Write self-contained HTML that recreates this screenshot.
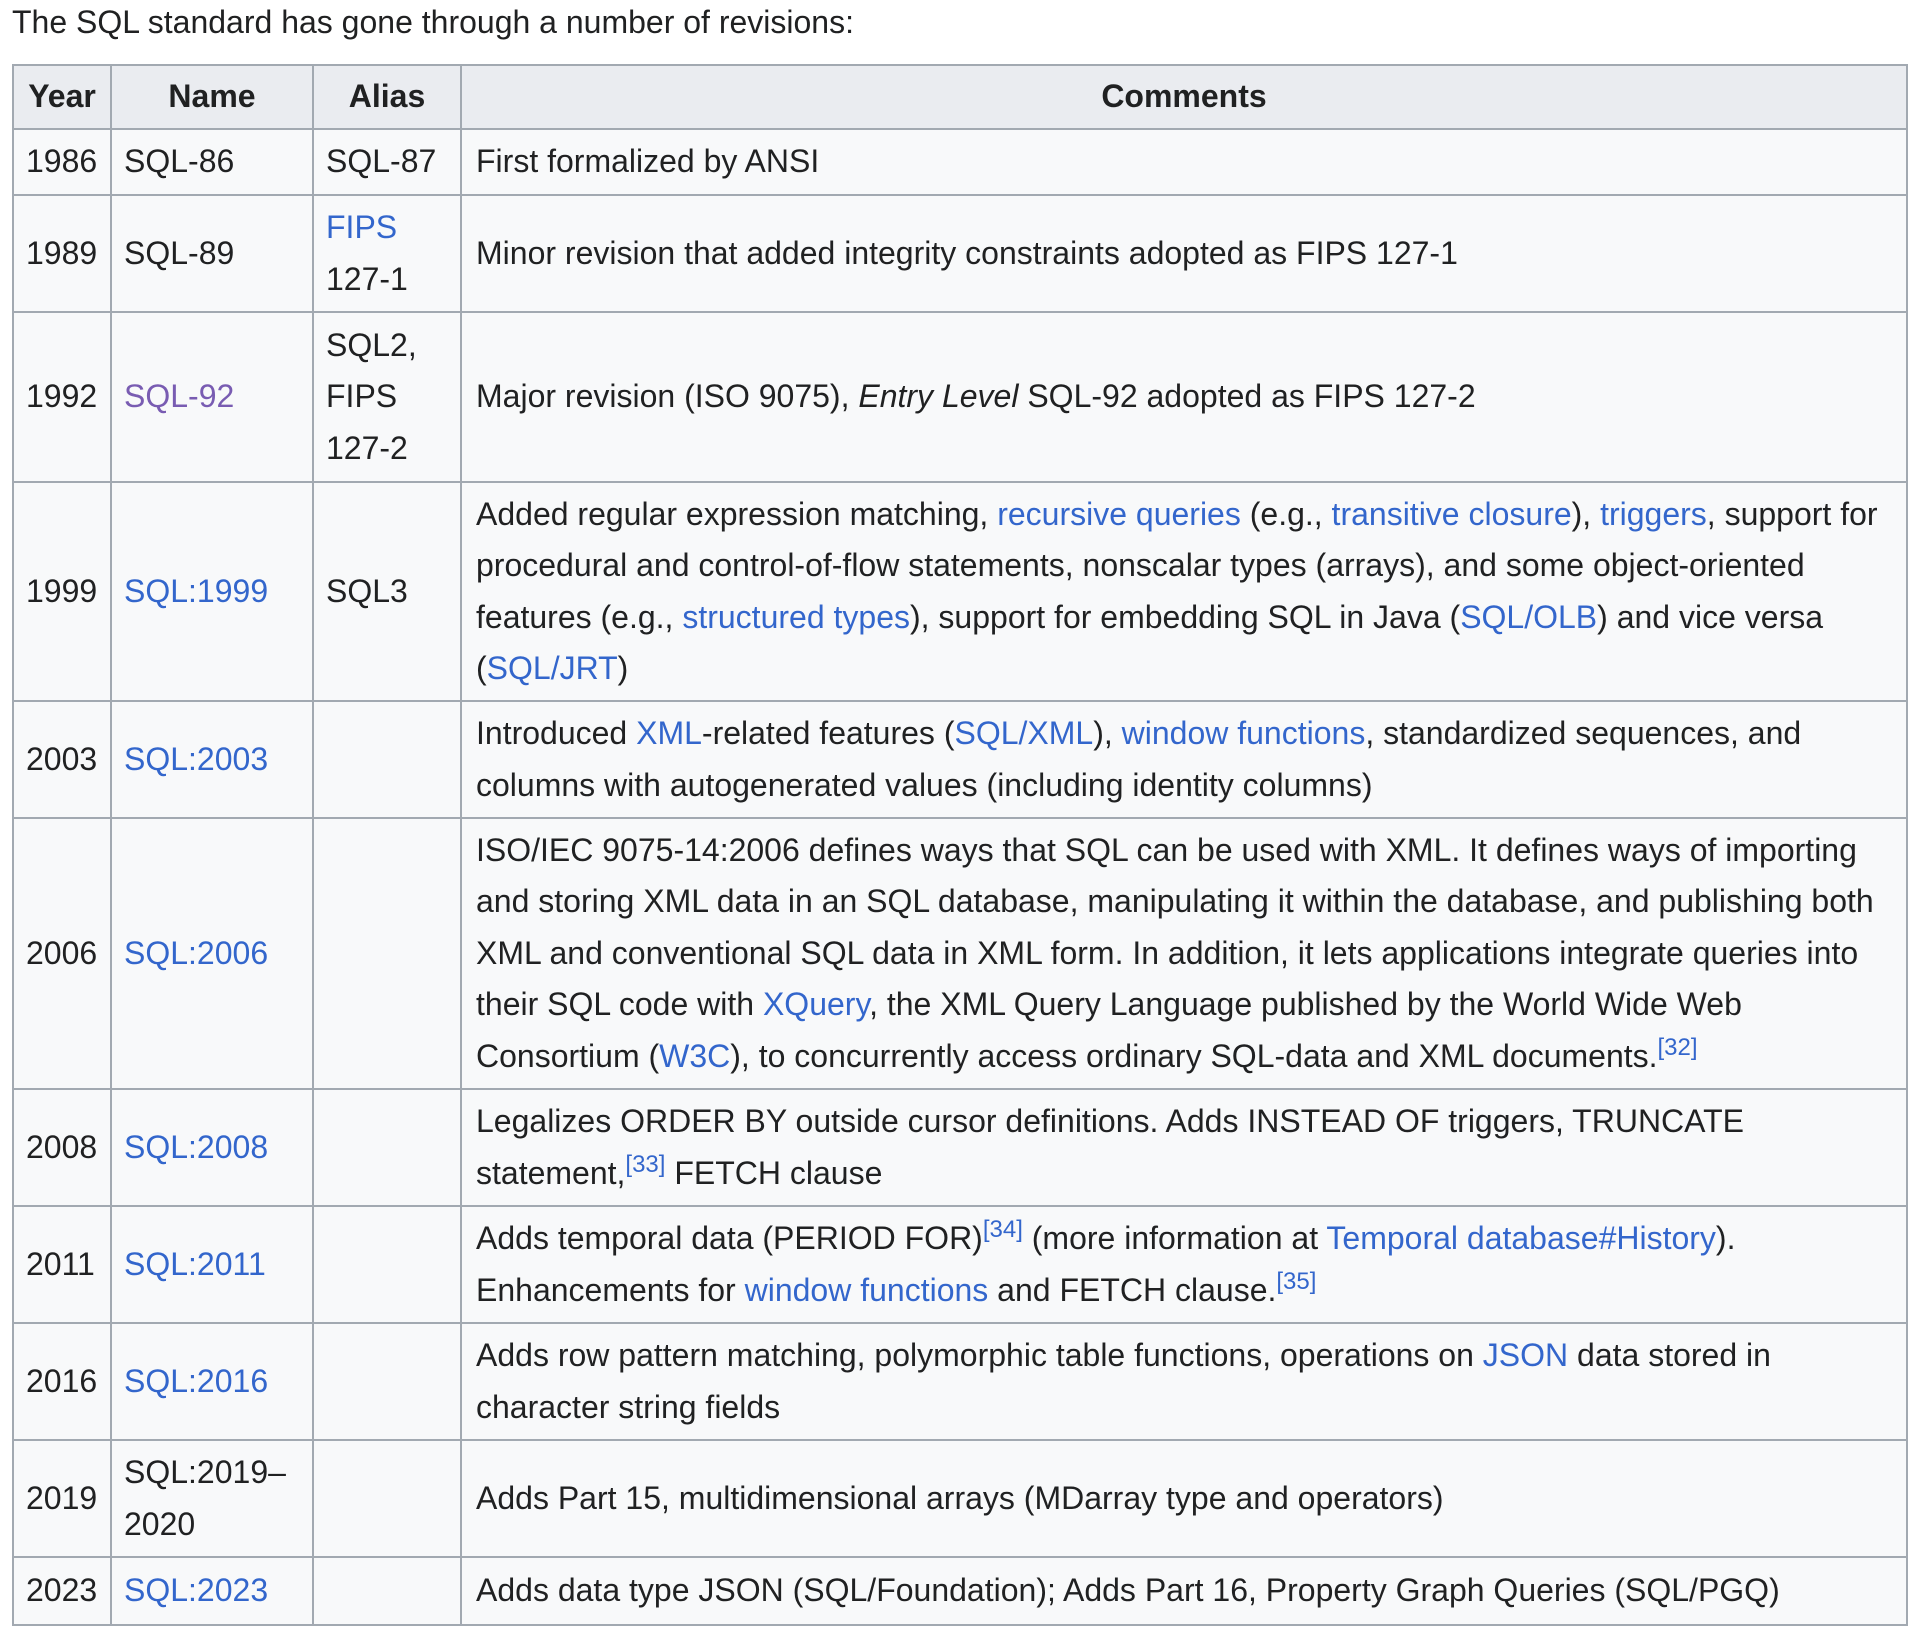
<!DOCTYPE html>
<html><head><meta charset="utf-8"><style>
body{margin:0;background:#fff;font-family:"Liberation Sans",Arial,sans-serif;color:#202122;font-size:32px;}
p{margin:0;position:absolute;left:12px;top:3px;line-height:38px;}
table{position:absolute;left:12px;top:64px;border-collapse:collapse;table-layout:fixed;width:1896px;background:#f8f9fa;}
td,th{border:2px solid #a2a9b1;padding:0 12px;line-height:51.5px;vertical-align:middle;white-space:nowrap;overflow:visible;}
td:nth-child(4){padding-left:14px}
th{background:#eaecf0;font-weight:bold;text-align:center;}
a{color:#3366cc;text-decoration:none}
a.v{color:#795cb2}
sup{font-size:24px;line-height:0;vertical-align:12px;color:#3366cc}
</style></head><body>
<p>The SQL standard has gone through a number of revisions:</p>
<table>
<colgroup><col style="width:98px"><col style="width:202px"><col style="width:148px"><col></colgroup>
<tr style="height:64px"><th>Year</th><th>Name</th><th>Alias</th><th>Comments</th></tr>
<tr style="height:66px"><td>1986</td><td>SQL-86</td><td>SQL-87</td><td>First formalized by ANSI</td></tr>
<tr style="height:117px"><td>1989</td><td>SQL-89</td><td><a>FIPS</a><br>127-1</td><td>Minor revision that added integrity constraints adopted as FIPS 127-1</td></tr>
<tr style="height:170px"><td>1992</td><td><a class="v">SQL-92</a></td><td>SQL2,<br>FIPS<br>127-2</td><td>Major revision (ISO 9075), <i>Entry Level</i> SQL-92 adopted as FIPS 127-2</td></tr>
<tr style="height:219px"><td>1999</td><td><a>SQL:1999</a></td><td>SQL3</td><td>Added regular expression matching, <a>recursive queries</a> (e.g., <a>transitive closure</a>), <a>triggers</a>, support for<br>procedural and control-of-flow statements, nonscalar types (arrays), and some object-oriented<br>features (e.g., <a>structured types</a>), support for embedding SQL in Java (<a>SQL/OLB</a>) and vice versa<br>(<a>SQL/JRT</a>)</td></tr>
<tr style="height:117px"><td>2003</td><td><a>SQL:2003</a></td><td></td><td>Introduced <a>XML</a>-related features (<a>SQL/XML</a>), <a>window functions</a>, standardized sequences, and<br>columns with autogenerated values (including identity columns)</td></tr>
<tr style="height:271px"><td>2006</td><td><a>SQL:2006</a></td><td></td><td>ISO/IEC 9075-14:2006 defines ways that SQL can be used with XML. It defines ways of importing<br>and storing XML data in an SQL database, manipulating it within the database, and publishing both<br>XML and conventional SQL data in XML form. In addition, it lets applications integrate queries into<br>their SQL code with <a>XQuery</a>, the XML Query Language published by the World Wide Web<br>Consortium (<a>W3C</a>), to concurrently access ordinary SQL-data and XML documents.<sup>[32]</sup></td></tr>
<tr style="height:117px"><td>2008</td><td><a>SQL:2008</a></td><td></td><td>Legalizes ORDER BY outside cursor definitions. Adds INSTEAD OF triggers, TRUNCATE<br>statement,<sup>[33]</sup> FETCH clause</td></tr>
<tr style="height:117px"><td>2011</td><td><a>SQL:2011</a></td><td></td><td>Adds temporal data (PERIOD FOR)<sup>[34]</sup> (more information at <a>Temporal database#History</a>).<br>Enhancements for <a>window functions</a> and FETCH clause.<sup>[35]</sup></td></tr>
<tr style="height:117px"><td>2016</td><td><a>SQL:2016</a></td><td></td><td>Adds row pattern matching, polymorphic table functions, operations on <a>JSON</a> data stored in<br>character string fields</td></tr>
<tr style="height:117px"><td>2019</td><td>SQL:2019–<br>2020</td><td></td><td>Adds Part 15, multidimensional arrays (MDarray type and operators)</td></tr>
<tr style="height:68px"><td>2023</td><td><a>SQL:2023</a></td><td></td><td>Adds data type JSON (SQL/Foundation); Adds Part 16, Property Graph Queries (SQL/PGQ)</td></tr>
</table>
</body></html>
